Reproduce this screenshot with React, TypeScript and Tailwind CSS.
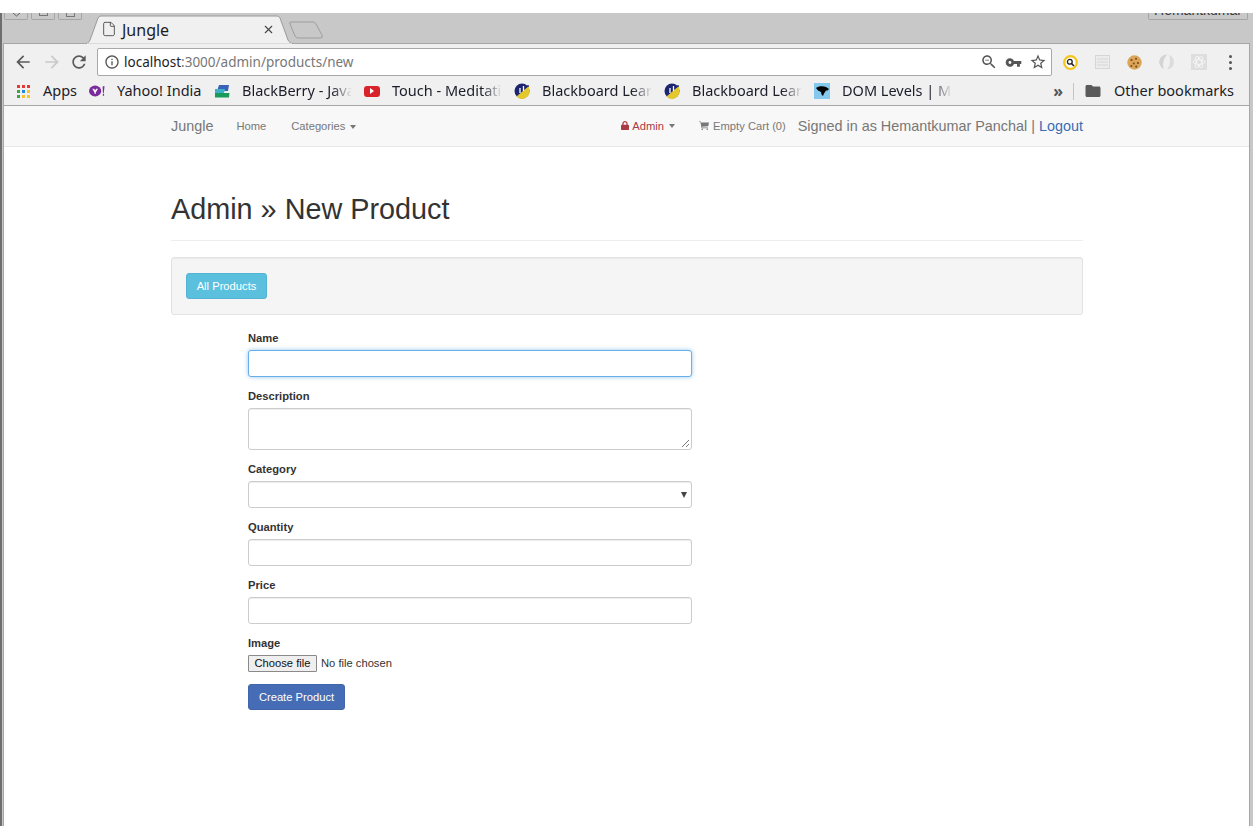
import { File, X } from "lucide-react";

const chromeFont = "font-['Noto_Sans',sans-serif]";

// material style glyphs, chrome uses these for its toolbar
function Mat({ d, size, className }: { d: string; size: number; className?: string }) {
  return (
    <svg width={size} height={size} viewBox="0 0 24 24" fill="currentColor" className={className}>
      <path d={d} />
    </svg>
  );
}

const icons = {
  back: "M20 11H7.83l5.59-5.59L12 4l-8 8 8 8 1.41-1.41L7.83 13H20v-2z",
  forward: "M12 4l-1.41 1.41L16.17 11H4v2h12.17l-5.58 5.59L12 20l8-8z",
  reload: "M17.65 6.35C16.2 4.9 14.21 4 12 4c-4.42 0-7.99 3.58-7.99 8s3.57 8 7.99 8c3.73 0 6.84-2.55 7.73-6h-2.08c-.82 2.33-3.04 4-5.65 4-3.31 0-6-2.69-6-6s2.69-6 6-6c1.66 0 3.14.69 4.22 1.78L13 11h7V4l-2.35 2.35z",
  info: "M11 7h2v2h-2zm0 4h2v6h-2zm1-9C6.48 2 2 6.48 2 12s4.48 10 10 10 10-4.48 10-10S17.52 2 12 2zm0 18c-4.41 0-8-3.59-8-8s3.59-8 8-8 8 3.59 8 8-3.59 8-8 8z",
  zoomOut: "M15.5 14h-.79l-.28-.27C15.41 12.59 16 11.11 16 9.5 16 5.91 13.09 3 9.5 3S3 5.91 3 9.5 5.91 16 9.5 16c1.61 0 3.09-.59 4.23-1.57l.27.28v.79l5 4.99L20.49 19l-4.99-5zm-6 0C7.01 14 5 11.99 5 9.5S7.01 5 9.5 5 14 7.01 14 9.5 11.99 14 9.5 14zM7 9h5v1H7z",
  key: "M12.65 10C11.83 7.67 9.61 6 7 6c-3.31 0-6 2.69-6 6s2.69 6 6 6c2.61 0 4.83-1.67 5.65-4H17v4h4v-4h2v-4H12.65zM7 14c-1.1 0-2-.9-2-2s.9-2 2-2 2 .9 2 2-.9 2-2 2z",
  star: "M22 9.24l-7.19-.62L12 2 9.19 8.63 2 9.24l5.46 4.73L5.82 21 12 17.27 18.18 21l-1.63-7.03L22 9.24zM12 15.4l-3.76 2.27 1-4.28-3.32-2.88 4.38-.38L12 6.1l1.71 4.04 4.38.38-3.32 2.88 1 4.28L12 15.4z",
  folder: "M10 4H4c-1.1 0-1.99.9-1.99 2L2 18c0 1.1.9 2 2 2h16c1.1 0 2-.9 2-2V8c0-1.1-.9-2-2-2h-8l-2-2z",
};

function Caret() {
  return <span className="ml-[5px] inline-block align-middle border-x-[3.5px] border-t-[4px] border-x-transparent border-t-[#777]" />;
}

function Bookmark({ icon, label, width, fade }: { icon: React.ReactNode; label: string; width: number; fade?: boolean }) {
  return (
    <div className="flex items-center shrink-0 h-full" style={{ width }}>
      <span className="w-[16px] h-[16px] shrink-0 flex items-center justify-center">{icon}</span>
      {fade ? (
        <span className="ml-[12px] w-[110px] whitespace-nowrap overflow-hidden text-[14.5px] text-[#1c1c2a] [mask-image:linear-gradient(to_right,black_82%,transparent_100%)]">{label}</span>
      ) : (
        <span className="ml-[12px] whitespace-nowrap text-[14.5px] text-[#1c1c2a]">{label}</span>
      )}
    </div>
  );
}

function Blackboard() {
  return (
    <svg width="16" height="16" viewBox="0 0 16 16">
      <circle cx="8" cy="8" r="7.5" fill="#1d2470" />
      <path d="M2.5 13.5 L12.5 5 L15 3 L15.5 8 A7.5 7.5 0 0 1 2.5 13.5Z" fill="#e3c92c" />
      <path d="M6 10V5M9.5 8V3" stroke="#fff" strokeWidth="1.3" />
      <circle cx="14" cy="3" r="0.9" fill="#1d2470" />
    </svg>
  );
}

function Field({ label, children }: { label: string; children: React.ReactNode }) {
  return (
    <div className="mb-[11px]">
      <label className="block mb-[3px] h-[17px] leading-[17px] text-[11.2px] font-bold text-[#333]">{label}</label>
      {children}
    </div>
  );
}

const inputCls = "block w-full rounded-[3px] border bg-white";
const restCls = "border-[#ccc] shadow-[inset_0_1px_1px_rgba(0,0,0,0.075)]";

export default function App() {
  return (
    <div className="w-[1253px] h-[839px] bg-white pt-[13px] overflow-hidden font-['Liberation_Sans',Arial,sans-serif]">
      <div className="h-[813px] border-l-[2px] border-[#6e6e6e] bg-[#c8c8c8] flex flex-col">
        {/* title bar */}
        <div className="h-[30px] shrink-0 relative">
          <div className="absolute left-[2px] top-0 flex gap-[3px]">
            <div className="w-[24px] h-[7px] rounded-b-[2px] border border-t-0 border-[#a5a5a5] flex justify-center">
              <svg width="9" height="4" viewBox="0 0 9 4"><path d="M1 0L4.5 3L8 0" fill="none" stroke="#666" strokeWidth="1" /></svg>
            </div>
            <div className="w-[24px] h-[7px] rounded-b-[2px] border border-t-0 border-[#a5a5a5] flex justify-center">
              <span className="w-[9px] h-[3px] border-b border-x border-[#777]" />
            </div>
            <div className="w-[24px] h-[7px] rounded-b-[2px] border border-t-0 border-[#a5a5a5] flex justify-center">
              <span className="w-[9px] h-[4px] border-b border-x border-[#777]" />
            </div>
          </div>
          <div className="absolute left-[1146px] top-0 w-[100px] h-[7px] overflow-hidden rounded-b-[2px] border border-t-0 border-[#a5a5a5] text-center">
            <div className="-mt-[11px] text-[14px] leading-[16px] text-[#3a3a3a]">Hemantkumar</div>
          </div>
          <svg className="absolute left-[84px] top-[2px] z-10" width="207" height="29" viewBox="0 0 207 29">
            <path d="M0 28.5 C2 28.5 3 27 4 25 L12 3 Q13 1 15 1 H191 Q193 1 194 3 L202 25 C203 27 205 28.5 207 28.5Z" fill="#f0f0f0" stroke="#9a9a9a" />
            <path d="M1 29 H206" stroke="#f0f0f0" strokeWidth="1.5" />
          </svg>
          <svg className="absolute left-[286px] top-[8px]" width="36" height="18" viewBox="0 0 36 18">
            <path d="M3 1 H25 Q27 1 28 3 L34 14 Q35 17 33 17 H10 Q8 17 7 15 L2 3 Q1 1 3 1Z" fill="#c8c8c8" stroke="#9e9e9e" />
          </svg>
          <div className={`absolute left-[99px] top-[5px] h-[22px] w-[174px] flex items-center z-20 ${chromeFont}`}>
            <File size={16} strokeWidth={1.3} className="text-[#444]" />
            <span className="ml-[5px] mt-[2px] text-[16px] text-[#1c1c1c]">Jungle</span>
            <X size={13} strokeWidth={2} className="ml-auto text-[#444]" />
          </div>
        </div>
        {/* browser chrome */}
        <div className="ml-px mr-[3px] flex-1 flex flex-col bg-white border-x border-[#a6a6a6]">
          <div className={`bg-[#f0f0f0] border-t border-[#a6a6a6] ${chromeFont}`}>
            <div className="h-[33px] flex items-center pt-[3px] pl-[9px] pr-[12px]">
              <Mat d={icons.back} size={20} className="text-[#5a5a5a]" />
              <Mat d={icons.forward} size={20} className="ml-[9px] text-[#c9c9c9]" />
              <Mat d={icons.reload} size={20} className="ml-[7px] text-[#5a5a5a]" />
              <div className="ml-[8px] w-[955px] h-[28px] rounded-[2px] border border-[#a8a8a8] bg-white flex items-center pl-[6px] pr-[4px]">
                <Mat d={icons.info} size={16} className="text-[#555]" />
                <span className="ml-[4px] text-[13.5px] text-[#1c1c1c]">localhost<span className="text-[#777]">:3000/admin/products/new</span></span>
                <Mat d={icons.zoomOut} size={18} className="ml-auto text-[#555]" />
                <Mat d={icons.key} size={17} className="ml-[7px] text-[#555]" />
                <Mat d={icons.star} size={18} className="ml-[7px] text-[#555]" />
              </div>
              <div className="ml-[11px] flex items-center flex-1">
                {/* extension icons */}
                <svg width="15" height="15" viewBox="0 0 15 15">
                  <circle cx="7.5" cy="7.5" r="6.3" fill="#fff" stroke="#f5c518" strokeWidth="2.2" />
                  <circle cx="6.8" cy="6.8" r="2.4" fill="none" stroke="#222" strokeWidth="1.3" />
                  <path d="M8.6 8.6L11 11" stroke="#222" strokeWidth="1.5" />
                </svg>
                <svg className="ml-[17px]" width="15" height="14" viewBox="0 0 15 14">
                  <rect x="0.5" y="0.5" width="14" height="13" fill="#ececec" stroke="#d6d6d6" />
                  <path d="M2 4H13M2 7H13M2 10H13" stroke="#d6d6d6" />
                </svg>
                <svg className="ml-[17px]" width="15" height="15" viewBox="0 0 15 15">
                  <circle cx="7.5" cy="7.5" r="7.2" fill="#dba458" />
                  <circle cx="4.5" cy="5" r="1.1" fill="#7a4a1c" />
                  <circle cx="9" cy="3.8" r="1" fill="#7a4a1c" />
                  <circle cx="11" cy="8" r="1.1" fill="#7a4a1c" />
                  <circle cx="6.8" cy="8.5" r="1" fill="#7a4a1c" />
                  <circle cx="4.3" cy="11" r="1" fill="#7a4a1c" />
                  <circle cx="9.2" cy="11.6" r="1.1" fill="#7a4a1c" />
                </svg>
                <svg className="ml-[17px]" width="16" height="16" viewBox="0 0 16 16">
                  <path d="M8 0.5A7.5 7.5 0 0 0 5 15C3 11 4 6 8 0.5Z" fill="#d4d4d4" />
                  <path d="M10 1A7.5 7.5 0 0 1 8 15.5C11 12 12 6 10 1Z" fill="#dcdcdc" />
                </svg>
                <svg className="ml-[16px]" width="16" height="16" viewBox="0 0 16 16">
                  <rect width="16" height="16" fill="#dedede" />
                  <g fill="none" stroke="#f6f6f6" strokeWidth="0.9">
                    <ellipse cx="8" cy="8" rx="6" ry="2.4" />
                    <ellipse cx="8" cy="8" rx="6" ry="2.4" transform="rotate(60 8 8)" />
                    <ellipse cx="8" cy="8" rx="6" ry="2.4" transform="rotate(120 8 8)" />
                  </g>
                </svg>
                <span className="ml-auto mr-[5px] flex flex-col gap-[3px]">
                  <i className="w-[3px] h-[3px] rounded-full bg-[#555]" />
                  <i className="w-[3px] h-[3px] rounded-full bg-[#555]" />
                  <i className="w-[3px] h-[3px] rounded-full bg-[#555]" />
                </span>
              </div>
            </div>
            <div className="h-[29px] flex items-center pl-[11px] pr-[15px] border-b border-[#a6a6a6]">
              <Bookmark width={74} label="Apps" icon={<span className="grid grid-cols-3 gap-[2px]">
                <i className="w-[3px] h-[3px] bg-[#e53935]" /><i className="w-[3px] h-[3px] bg-[#e53935]" /><i className="w-[3px] h-[3px] bg-[#e53935]" />
                <i className="w-[3px] h-[3px] bg-[#43a047]" /><i className="w-[3px] h-[3px] bg-[#1e88e5]" /><i className="w-[3px] h-[3px] bg-[#fbc02d]" />
                <i className="w-[3px] h-[3px] bg-[#43a047]" /><i className="w-[3px] h-[3px] bg-[#fbc02d]" /><i className="w-[3px] h-[3px] bg-[#fbc02d]" />
              </span>} />
              <Bookmark width={125} label=" Yahoo! India" icon={
                <svg width="17" height="12" viewBox="0 0 17 12">
                  <ellipse cx="6.5" cy="6" rx="6.5" ry="5.8" fill="#7b2a9c" />
                  <path d="M3.5 3.5H5.5L6.5 5.5L7.5 3.5H9.5L7.2 7.5V9H5.8V7.5Z" fill="#fff" />
                  <path d="M14.5 1H16.5L15.7 8H14.8ZM14.7 9H16V11H14.7Z" fill="#7b2a9c" />
                </svg>
              } />
              <Bookmark width={150} fade label="BlackBerry - Java" icon={
                <svg width="16" height="15" viewBox="0 0 16 15">
                  <path d="M5 1H15L14 7H3Z" fill="#3a62b8" />
                  <path d="M1 5H11L10 9H1Z" fill="#3fb0c8" />
                  <path d="M1 9H15.5L15 13.5H1Z" fill="#1a9a5b" />
                </svg>
              } />
              <Bookmark width={150} fade label="Touch - Meditation" icon={<span className="w-[16px] h-[11px] rounded-[3px] bg-[#d9232a] flex items-center justify-center"><i className="border-y-[3px] border-l-[4px] border-y-transparent border-l-white" /></span>} />
              <Bookmark width={150} fade label="Blackboard Learn" icon={<Blackboard />} />
              <Bookmark width={150} fade label="Blackboard Learn" icon={<Blackboard />} />
              <Bookmark width={150} fade label="DOM Levels | MDN" icon={
                <svg width="16" height="16" viewBox="0 0 16 16">
                  <rect width="16" height="16" fill="#85c8ee" />
                  <path d="M2 5C4 3 9 2.5 12 4L15 6L13.5 7.5L12 7.5L10 10.5L9 13L7.5 11.5L7 9L4 7.5Z" fill="#000" />
                </svg>
              } />
              <span className="ml-auto text-[16px] font-bold leading-none text-[#555]">»</span>
              <span className="ml-[10px] w-px h-[17px] bg-[#c4c4c4]" />
              <Mat d={icons.folder} size={18} className="ml-[10px] text-[#5a5a5a]" />
              <span className="ml-[12px] text-[14.5px] text-[#1c1c2a] whitespace-nowrap">Other bookmarks</span>
            </div>
          </div>
          {/* page */}
          <nav className="h-[41px] shrink-0 bg-[#f8f8f8] border-b border-[#e7e7e7] text-[11.2px] text-[#777]">
            <div className="w-[912px] ml-[167px] h-full flex items-center">
              <span className="text-[14.4px] mt-[2px]">Jungle</span>
              <span className="ml-[23px]">Home</span>
              <span className="ml-[25px]">Categories<Caret /></span>
              <span className="ml-[265px] text-[#a93a46] flex items-center">
                <svg className="mr-[3px]" width="8" height="9" viewBox="0 0 8 9">
                  <path d="M2 4V2.6A2 2 0 0 1 6 2.6V4" fill="none" stroke="currentColor" strokeWidth="1.2" />
                  <rect y="3.8" width="8" height="5.2" rx="0.7" fill="currentColor" />
                </svg>
                Admin<Caret />
              </span>
              <span className="ml-[24px] flex items-center">
                <svg className="mr-[4px]" width="10" height="9" viewBox="0 0 10 9" fill="currentColor">
                  <path d="M0 0.5H1.8L2.2 1.5H10L9.2 5.2L3 5.8L3.2 6.6H9V7.2H2.6L1.4 1.1H0Z" />
                  <circle cx="3.2" cy="8.2" r="0.8" />
                  <circle cx="8.3" cy="8.2" r="0.8" />
                </svg>
                Empty Cart (0)
              </span>
              <span className="ml-auto mt-[2px] text-[14.4px]">Signed in as Hemantkumar Panchal | <span className="text-[#3b6cb4]">Logout</span></span>
            </div>
          </nav>
          <main className="w-[912px] ml-[167px]">
            <h1 className="mt-[44px] h-[36px] text-[28.8px] leading-[37px] text-[#333]">Admin » New Product</h1>
            <div className="mt-[13px] border-t border-[#eee]" />
            <div className="mt-[16px] h-[58px] rounded-[3px] border border-[#e3e3e3] bg-[#f5f5f5] pl-[14px] pt-[15px] shadow-[inset_0_1px_1px_rgba(0,0,0,0.05)]">
              <button className="h-[26px] w-[81px] rounded-[3px] border border-[#54b4d2] bg-[#5bc0de] text-[11.2px] text-white">All Products</button>
            </div>
            <form className="mt-[15px] ml-[77px] w-[444px]">
              <Field label="Name">
                <div className={`${inputCls} h-[27px] border-[#66afe9] shadow-[0_0_4px_rgba(102,175,233,0.7)]`} />
              </Field>
              <Field label="Description">
                <div className={`${inputCls} ${restCls} h-[42px] relative`}>
                  <svg className="absolute right-[1px] bottom-[1px]" width="9" height="9" viewBox="0 0 9 9"><path d="M1 8L8 1M5 8L8 5" stroke="#555" strokeWidth="0.8" /></svg>
                </div>
              </Field>
              <Field label="Category">
                <div className={`${inputCls} ${restCls} h-[27px] relative`}>
                  <i className="absolute right-[4px] top-[10px] border-x-[3px] border-t-[6px] border-x-transparent border-t-[#444]" />
                </div>
              </Field>
              <Field label="Quantity"><div className={`${inputCls} ${restCls} h-[27px]`} /></Field>
              <Field label="Price"><div className={`${inputCls} ${restCls} h-[27px]`} /></Field>
              <div className="mb-[12px]">
                <label className="block mb-[3px] h-[17px] leading-[17px] text-[11.2px] font-bold text-[#333]">Image</label>
                <div className="flex items-center h-[17px] text-[11.2px] text-[#333]">
                  <span className="h-[17px] w-[69px] border border-[#8a8a8a] rounded-[1px] bg-[#efefef] text-center leading-[15px] text-[#111]">Choose file</span>
                  <span className="ml-[4px]">No file chosen</span>
                </div>
              </div>
              <button className="h-[26px] w-[97px] rounded-[3px] border border-[#4065ab] bg-[#456cb4] text-[11.2px] text-white">Create Product</button>
            </form>
          </main>
        </div>
      </div>
    </div>
  );
}
